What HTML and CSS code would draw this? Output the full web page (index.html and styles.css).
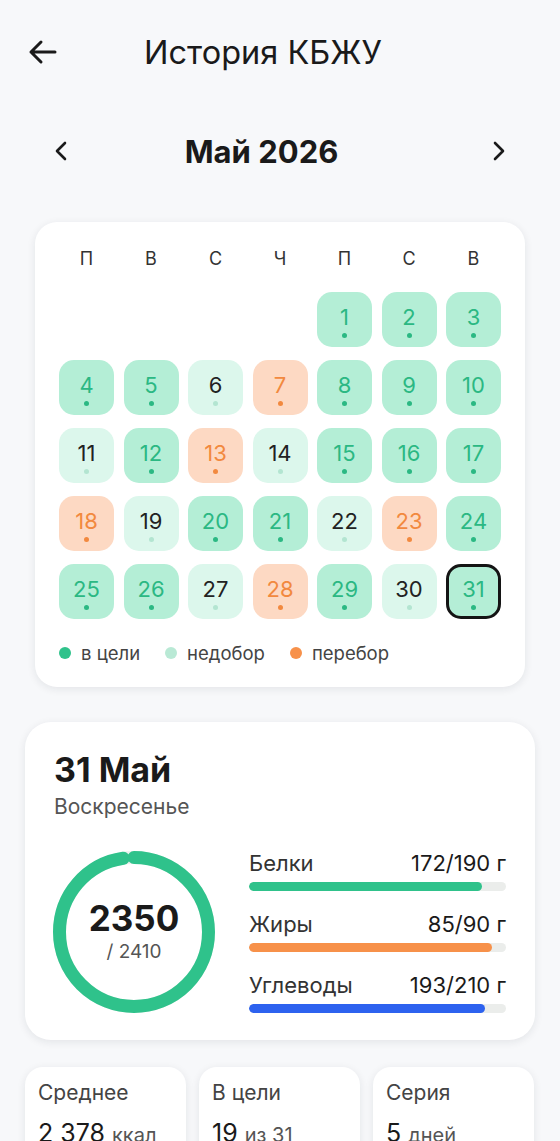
FILE: index.html
```html
<!DOCTYPE html>
<html lang="ru">
<head>
    <meta charset="UTF-8">
    <meta name="viewport" content="width=device-width, initial-scale=1.0">
    <title>История КБЖУ</title>
    <link rel="stylesheet" href="styles.css">
</head>
<body>
    <header class="top-bar">
        <button class="icon-btn back-btn" aria-label="Назад">
            <svg width="30" height="26" viewBox="0 0 30 26" fill="none" stroke="#1a1a1a" stroke-width="3" stroke-linecap="round" stroke-linejoin="round">
                <path d="M27 13H3M13 3L3 13l10 10"/>
            </svg>
        </button>
        <h1 class="page-title">История КБЖУ</h1>
    </header>

    <div class="month-nav">
        <button class="icon-btn" aria-label="Предыдущий месяц">
            <svg width="16" height="22" viewBox="0 0 16 22" fill="none" stroke="#1a1a1a" stroke-width="2.6" stroke-linecap="round" stroke-linejoin="round">
                <path d="M12 3L4 11l8 8"/>
            </svg>
        </button>
        <h2 class="month-title">Май 2026</h2>
        <button class="icon-btn" aria-label="Следующий месяц">
            <svg width="16" height="22" viewBox="0 0 16 22" fill="none" stroke="#1a1a1a" stroke-width="2.6" stroke-linecap="round" stroke-linejoin="round">
                <path d="M4 3l8 8-8 8"/>
            </svg>
        </button>
    </div>

    <section class="card calendar">
        <div class="weekdays">
            <span>П</span><span>В</span><span>С</span><span>Ч</span><span>П</span><span>С</span><span>В</span>
        </div>
        <div class="days" id="days"></div>
        <div class="legend">
            <span class="legend-item"><i class="dot goal"></i>в цели</span>
            <span class="legend-item"><i class="dot under"></i>недобор</span>
            <span class="legend-item"><i class="dot over"></i>перебор</span>
        </div>
    </section>

    <section class="card day-card">
        <h3 class="day-title">31 Май</h3>
        <p class="day-sub">Воскресенье</p>
        <div class="day-body">
            <div class="ring">
                <svg width="162" height="162" viewBox="0 0 162 162">
                    <circle cx="81" cy="81" r="74.5" fill="none" stroke="#eef0ee" stroke-width="13"/>
                    <circle id="ringArc" cx="81" cy="81" r="74.5" fill="none" stroke="#2fc28b" stroke-width="13" stroke-linecap="round" transform="rotate(-90 81 81)"/>
                </svg>
                <div class="ring-text">
                    <div class="ring-value">2350</div>
                    <div class="ring-goal">/ 2410</div>
                </div>
            </div>
            <div class="macros">
                <div class="macro">
                    <div class="macro-head"><span>Белки</span><span class="macro-val">172/190 г</span></div>
                    <div class="bar"><div class="fill protein" style="width: 90.5%"></div></div>
                </div>
                <div class="macro">
                    <div class="macro-head"><span>Жиры</span><span class="macro-val">85/90 г</span></div>
                    <div class="bar"><div class="fill fat" style="width: 94.4%"></div></div>
                </div>
                <div class="macro">
                    <div class="macro-head"><span>Углеводы</span><span class="macro-val">193/210 г</span></div>
                    <div class="bar"><div class="fill carbs" style="width: 91.9%"></div></div>
                </div>
            </div>
        </div>
    </section>

    <section class="stats">
        <div class="stat">
            <div class="stat-label">Среднее</div>
            <div class="stat-value">2 378 <small>ккал</small></div>
        </div>
        <div class="stat">
            <div class="stat-label">В цели</div>
            <div class="stat-value">19 <small>из 31</small></div>
        </div>
        <div class="stat">
            <div class="stat-label">Серия</div>
            <div class="stat-value">5 <small>дней</small></div>
        </div>
    </section>

    <script>
        // g = в цели, u = недобор, o = перебор
        const days = [
            'g','g','g',
            'g','g','u','o','g','g','g',
            'u','g','o','u','g','g','g',
            'o','u','g','g','u','o','g',
            'g','g','u','o','g','u','g'
        ];
        const selected = 31;
        const firstOffset = 4; // май 2026 начинается с пятницы

        const grid = document.getElementById('days');
        for (let i = 0; i < firstOffset; i++) {
            grid.appendChild(document.createElement('span'));
        }
        days.forEach(function (status, i) {
            const n = i + 1;
            const cell = document.createElement('div');
            cell.className = 'day ' + status + (n === selected ? ' selected' : '');
            cell.innerHTML = '<span class="num">' + n + '</span><i class="mark"></i>';
            grid.appendChild(cell);
        });

        const arc = document.getElementById('ringArc');
        const len = 2 * Math.PI * 74.5;
        const pct = 2350 / 2410;
        arc.setAttribute('stroke-dasharray', (len * pct) + ' ' + len);
    </script>
</body>
</html>
```

FILE: styles.css
```css
* {
    box-sizing: border-box;
}
body {
    margin: 0;
    background: #f7f8fa;
    font-family: Inter, "Noto Sans", sans-serif;
    color: #1a1a1a;
}
.icon-btn {
    background: none;
    border: none;
    padding: 0;
    display: flex;
    align-items: center;
    justify-content: center;
    cursor: pointer;
}

.top-bar {
    display: flex;
    align-items: center;
    height: 104px;
    padding-left: 28px;
}
.page-title {
    margin: 0 0 0 86px;
    font-size: 32.5px;
    font-weight: 400;
}

.month-nav {
    display: flex;
    align-items: center;
    justify-content: space-between;
    height: 94px;
    padding: 0 53px 0 53px;
}
.month-title {
    margin: 0 37px 0 0;
    font-size: 31px;
    font-weight: 700;
}

.card {
    background: #fff;
    box-shadow: 0 2px 8px rgba(20, 30, 40, 0.09);
}

.calendar {
    margin: 24px 35px 0;
    border-radius: 22px;
    padding: 24px 24px 22px;
}
.weekdays {
    display: grid;
    grid-template-columns: repeat(7, 1fr);
    column-gap: 9.5px;
    text-align: center;
    font-size: 18px;
    color: #333;
    height: 26px;
    line-height: 26px;
}
.days {
    display: grid;
    grid-template-columns: repeat(7, 1fr);
    column-gap: 9.5px;
    row-gap: 13px;
    margin-top: 20px;
}
.day {
    height: 55px;
    border-radius: 15px;
    display: flex;
    flex-direction: column;
    align-items: center;
    justify-content: center;
}
.day .num {
    font-size: 22px;
    line-height: 26px;
    margin-top: 3px;
}
.day .mark {
    width: 5px;
    height: 5px;
    border-radius: 50%;
    margin-top: 3px;
}
.day.g {
    background: #b4eed6;
    color: #2bb883;
}
.day.g .mark {
    background: #2bb883;
}
.day.u {
    background: #dcf7ec;
    color: #222;
}
.day.u .mark {
    background: #b3e5d1;
}
.day.o {
    background: #fdd9c3;
    color: #f2893f;
}
.day.o .mark {
    background: #f2893f;
}
.day.selected {
    border: 3px solid #141414;
}

.legend {
    display: flex;
    gap: 25px;
    margin-top: 22px;
    font-size: 18.5px;
    color: #444;
    line-height: 24px;
}
.legend-item {
    display: flex;
    align-items: center;
    gap: 10px;
}
.dot {
    width: 12px;
    height: 12px;
    border-radius: 50%;
    display: inline-block;
}
.dot.goal {
    background: #2fc28b;
}
.dot.under {
    background: #b9e9d5;
}
.dot.over {
    background: #f7914a;
}

.day-card {
    margin: 35px 25px 0;
    border-radius: 26px;
    padding: 28px 29px 27px 28px;
}
.day-title {
    margin: 0;
    font-size: 34px;
    font-weight: 700;
    line-height: 40px;
    padding-left: 1px;
}
.day-sub {
    margin: 4px 0 0 1px;
    font-size: 21px;
    line-height: 26px;
    color: #555;
}
.day-body {
    display: flex;
    align-items: center;
    gap: 34px;
    margin-top: 30px;
}
.ring {
    position: relative;
    width: 162px;
    height: 162px;
    flex-shrink: 0;
}
.ring svg {
    display: block;
}
.ring-text {
    position: absolute;
    inset: 0;
    display: flex;
    flex-direction: column;
    align-items: center;
    justify-content: center;
}
.ring-value {
    font-size: 35px;
    font-weight: 700;
    line-height: 38px;
}
.ring-goal {
    font-size: 19px;
    color: #555;
    line-height: 24px;
    margin-top: 3px;
}

.macros {
    flex: 1;
    display: flex;
    flex-direction: column;
    gap: 20px;
}
.macro-head {
    display: flex;
    justify-content: space-between;
    font-size: 22px;
    line-height: 26px;
    color: #333;
}
.macro-val {
    color: #1a1a1a;
}
.bar {
    margin-top: 6px;
    height: 9px;
    border-radius: 5px;
    background: #ebedeb;
    overflow: hidden;
}
.fill {
    height: 100%;
    border-radius: 5px;
}
.fill.protein {
    background: #2fc28b;
}
.fill.fat {
    background: #f7914a;
}
.fill.carbs {
    background: #2d62ef;
}

.stats {
    display: grid;
    grid-template-columns: repeat(3, 1fr);
    gap: 13px;
    margin: 27px 26px 0 25px;
}
.stat {
    background: #fff;
    border-radius: 18px;
    box-shadow: 0 2px 8px rgba(20, 30, 40, 0.09);
    padding: 13px 13px 20px;
}
.stat-label {
    font-size: 21px;
    line-height: 26px;
    color: #444;
}
.stat-value {
    margin-top: 12px;
    font-size: 25px;
    line-height: 30px;
    color: #1a1a1a;
}
.stat-value small {
    font-size: 20px;
    color: #555;
}
```
